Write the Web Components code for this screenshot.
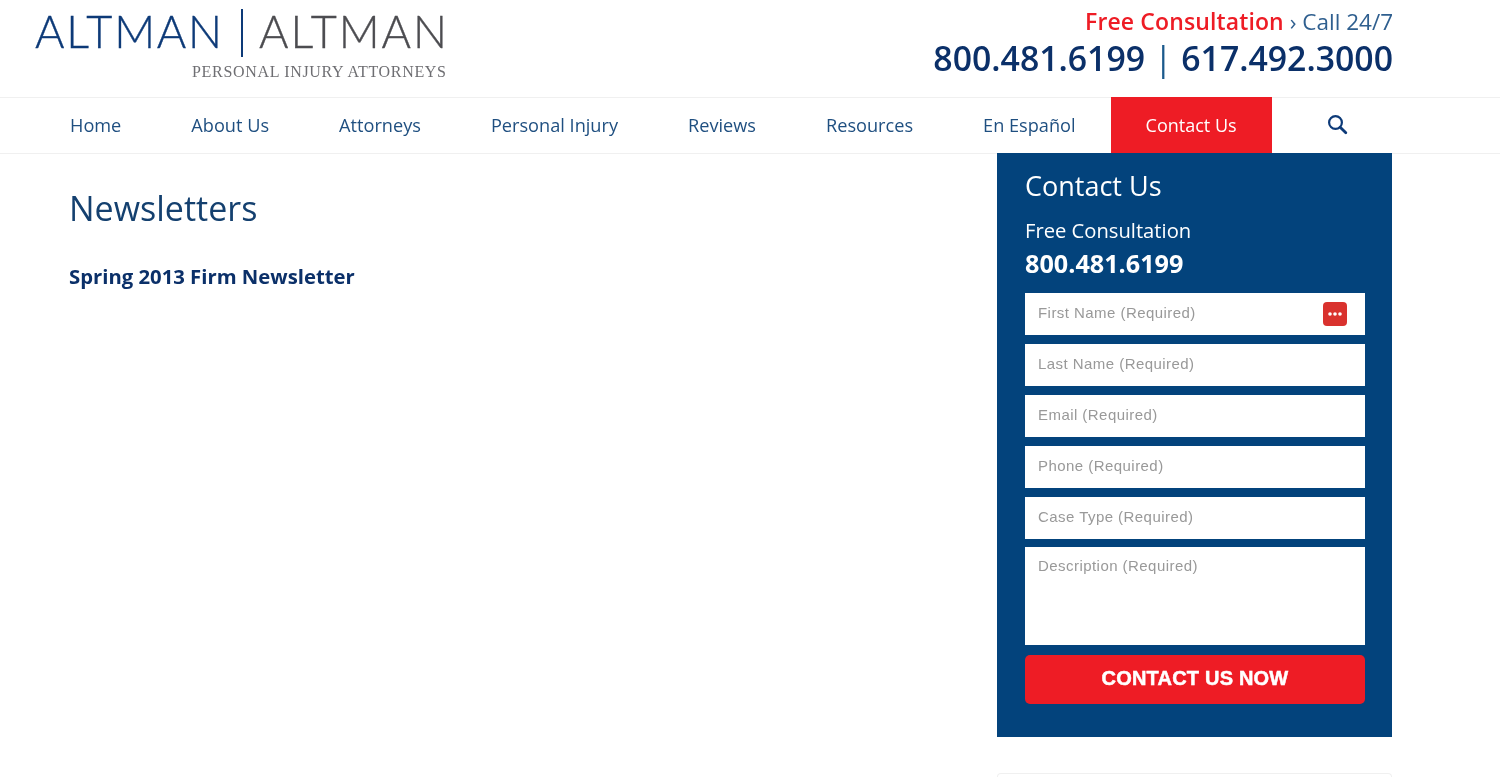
<!DOCTYPE html>
<html lang="en">
<head>
<meta charset="utf-8">
<title>Newsletters</title>
<style>
  html, body { margin: 0; padding: 0; background: #fff; }
  body { font-family: "Open Sans", sans-serif; height: 777px; overflow: hidden; }
</style>
</head>
<body>
<site-page>
  <site-header slot="header"></site-header>
  <site-nav slot="nav">
    <nav-link>Home</nav-link>
    <nav-link>About Us</nav-link>
    <nav-link>Attorneys</nav-link>
    <nav-link>Personal Injury</nav-link>
    <nav-link>Reviews</nav-link>
    <nav-link>Resources</nav-link>
    <nav-link>En Español</nav-link>
    <nav-link active>Contact Us</nav-link>
    <nav-search></nav-search>
  </site-nav>
  <news-content slot="main"></news-content>
  <contact-panel slot="side">
    <contact-field icon>First Name (Required)</contact-field>
    <contact-field>Last Name (Required)</contact-field>
    <contact-field>Email (Required)</contact-field>
    <contact-field>Phone (Required)</contact-field>
    <contact-field>Case Type (Required)</contact-field>
    <contact-field multiline>Description (Required)</contact-field>
  </contact-panel>
</site-page>

<script>
"use strict";

(() => {
  customElements.define("site-page", class extends HTMLElement {
    constructor() {
      super();
      this.attachShadow({mode: "open"}).innerHTML = `
        <style>
          :host {
            display: flex;
            flex-direction: column;
            height: 777px;
            overflow: hidden;
            filter: blur(.4px);
          }

          #columns {
            display: flex;
            flex: none;
            justify-content: space-between;
            padding: 0 108px 0 69px;
          }

          #side {
            display: flex;
            flex-direction: column;
            margin-top: -1px;
          }

          #next-card {
            height: 6px;
            margin-top: 36px;
            border: 1px solid #f0f0f0;
            border-bottom: 0;
            border-radius: 4px 4px 0 0;
          }
        </style>
        <slot name="header"></slot>
        <slot name="nav"></slot>
        <div id="columns">
          <slot name="main"></slot>
          <div id="side">
            <slot name="side"></slot>
            <div id="next-card"></div>
          </div>
        </div>
      `;
    }
  });

  customElements.define("site-header", class extends HTMLElement {
    constructor() {
      super();
      this.attachShadow({mode: "open"}).innerHTML = `
        <style>
          :host {
            display: flex;
            flex: none;
            justify-content: space-between;
            height: 97px;
            padding: 0 107px 0 35px;
            box-sizing: border-box;
            font-family: "Open Sans", sans-serif;
          }

          svg {
            display: block;
          }

          #call {
            display: flex;
            flex-direction: column;
            align-items: flex-end;
          }

          #top-line {
            font-size: 22.5px;
            line-height: 30px;
            margin-top: 6px;
            color: #2f5f8f;
          }

          #top-line b {
            font-size: 23px;
            letter-spacing: .12px;
            font-weight: 600;
            color: #ee1c25;
          }

          #phones {
            margin-top: -1px;
            font-size: 33.8px;
            line-height: 44px;
            font-weight: 600;
            color: #0b3069;
          }

          #phones i {
            font-style: normal;
            font-weight: 400;
            color: #1b5a8c;
          }
        </style>
        <svg id="logo" width="420" height="90" viewBox="0 0 420 90">
          <text x="0" y="48" font-family="Lato" font-weight="300" font-size="45" textLength="187" fill="#0d3a78" stroke="#0d3a78" stroke-width=".35">ALTMAN</text>
          <text x="224" y="48" font-family="Lato" font-weight="300" font-size="45" textLength="188" fill="#4c4c50" stroke="#4c4c50" stroke-width=".35">ALTMAN</text>
          <text x="157" y="77" font-family="Liberation Serif" font-size="16" textLength="254" fill="#6e6e72">PERSONAL INJURY ATTORNEYS</text>
          <rect x="206" y="9" width="2" height="48" fill="#0d3a78"/>
        </svg>
        <div id="call">
          <div id="top-line"><b>Free Consultation</b> › Call 24/7</div>
          <div id="phones">800.481.6199 <i>|</i> 617.492.3000</div>
        </div>
      `;
    }
  });

  customElements.define("site-nav", class extends HTMLElement {
    constructor() {
      super();
      this.attachShadow({mode: "open"}).innerHTML = `
        <style>
          :host {
            display: flex;
            flex: none;
            height: 57px;
            padding-left: 35px;
            box-sizing: border-box;
            border-top: 1px solid #f0f0f0;
            border-bottom: 1px solid #f0f0f0;
          }
        </style>
        <slot></slot>
      `;
    }
  });

  customElements.define("nav-link", class extends HTMLElement {
    constructor() {
      super();
      this.attachShadow({mode: "open"}).innerHTML = `
        <style>
          :host {
            display: flex;
            align-items: center;
            padding: 0 35px 2px;
            margin-bottom: -1px;
            font-size: 18.16px;
            color: #1f4f80;
            white-space: nowrap;
          }

          :host([active]) {
            background: #ee1c25;
            color: #fff;
            font-size: 18px;
            font-weight: 500;
            margin-top: -1px;
          }
        </style>
        <slot></slot>
      `;
    }
  });

  customElements.define("nav-search", class extends HTMLElement {
    constructor() {
      super();
      this.attachShadow({mode: "open"}).innerHTML = `
        <style>
          :host {
            display: flex;
            align-items: center;
            padding-left: 55px;
            padding-bottom: 2px;
          }
        </style>
        <svg width="21" height="21" viewBox="0 0 21 21" fill="none" stroke="#0d3a78" stroke-width="2.2">
          <circle cx="8.5" cy="8.5" r="6.4"/>
          <path d="M13.2 13.2l5.6 5.6" stroke-linecap="round" stroke-width="2.8"/>
        </svg>
      `;
    }
  });

  customElements.define("news-content", class extends HTMLElement {
    constructor() {
      super();
      this.attachShadow({mode: "open"}).innerHTML = `
        <style>
          :host {
            display: block;
            padding-top: 30px;
          }

          h1 {
            margin: 0;
            font-size: 34px;
            line-height: 48px;
            font-weight: 400;
            color: #14406f;
          }

          a {
            display: block;
            margin-top: 30px;
            font-size: 20.3px;
            line-height: 28px;
            font-weight: 700;
            color: #0b3069;
          }
        </style>
        <h1>Newsletters</h1>
        <a>Spring 2013 Firm Newsletter</a>
      `;
    }
  });

  customElements.define("contact-panel", class extends HTMLElement {
    constructor() {
      super();
      this.attachShadow({mode: "open"}).innerHTML = `
        <style>
          :host {
            display: flex;
            flex-direction: column;
            width: 395px;
            height: 584px;
            padding: 14px 27px 0 28px;
            box-sizing: border-box;
            background: #03437c;
            color: #fff;
          }

          h2 {
            margin: 0;
            font-size: 27px;
            line-height: 38px;
            font-weight: 400;
          }

          #free {
            margin-top: 11px;
            font-size: 20.2px;
            line-height: 28px;
            font-weight: 500;
          }

          #phone {
            margin-top: 2px;
            font-size: 25.2px;
            line-height: 34px;
            font-weight: 700;
          }

          #fields {
            display: flex;
            flex-direction: column;
            gap: 9px;
            margin-top: 13px;
          }

          button {
            height: 49px;
            margin-top: 10px;
            padding: 0 0 2px;
            border: 0;
            border-radius: 5px;
            background: #ee1c25;
            color: #fff;
            font-family: "Liberation Sans", sans-serif;
            font-size: 20px;
            font-weight: 700;
            letter-spacing: .2px;
            -webkit-text-stroke: .5px #fff;
          }
        </style>
        <h2>Contact Us</h2>
        <div id="free">Free Consultation</div>
        <div id="phone">800.481.6199</div>
        <div id="fields"><slot></slot></div>
        <button>CONTACT US NOW</button>
      `;
    }
  });

  customElements.define("contact-field", class extends HTMLElement {
    constructor() {
      super();
      this.attachShadow({mode: "open"}).innerHTML = `
        <style>
          :host {
            display: flex;
            align-items: center;
            justify-content: space-between;
            height: 42px;
            padding: 0 18px 0 13px;
            box-sizing: border-box;
            background: #fff;
            font-family: "Liberation Sans", sans-serif;
            font-size: 15px;
            letter-spacing: .45px;
            color: #999;
          }

          :host([multiline]) {
            align-items: flex-start;
            height: 98px;
            margin-top: -1px;
            padding-top: 10px;
          }

          span {
            margin-bottom: 3px;
          }

          svg {
            display: none;
          }

          :host([icon]) svg {
            display: block;
          }
        </style>
        <span><slot></slot></span>
        <svg width="24" height="24" viewBox="0 0 24 24">
          <rect width="24" height="24" rx="4" fill="#d9322e"/>
          <circle cx="7" cy="12" r="1.8" fill="#fff"/>
          <circle cx="12" cy="12" r="1.8" fill="#fff"/>
          <circle cx="17" cy="12" r="1.8" fill="#fff"/>
        </svg>
      `;
    }
  });
})();
</script>
</body>
</html>
